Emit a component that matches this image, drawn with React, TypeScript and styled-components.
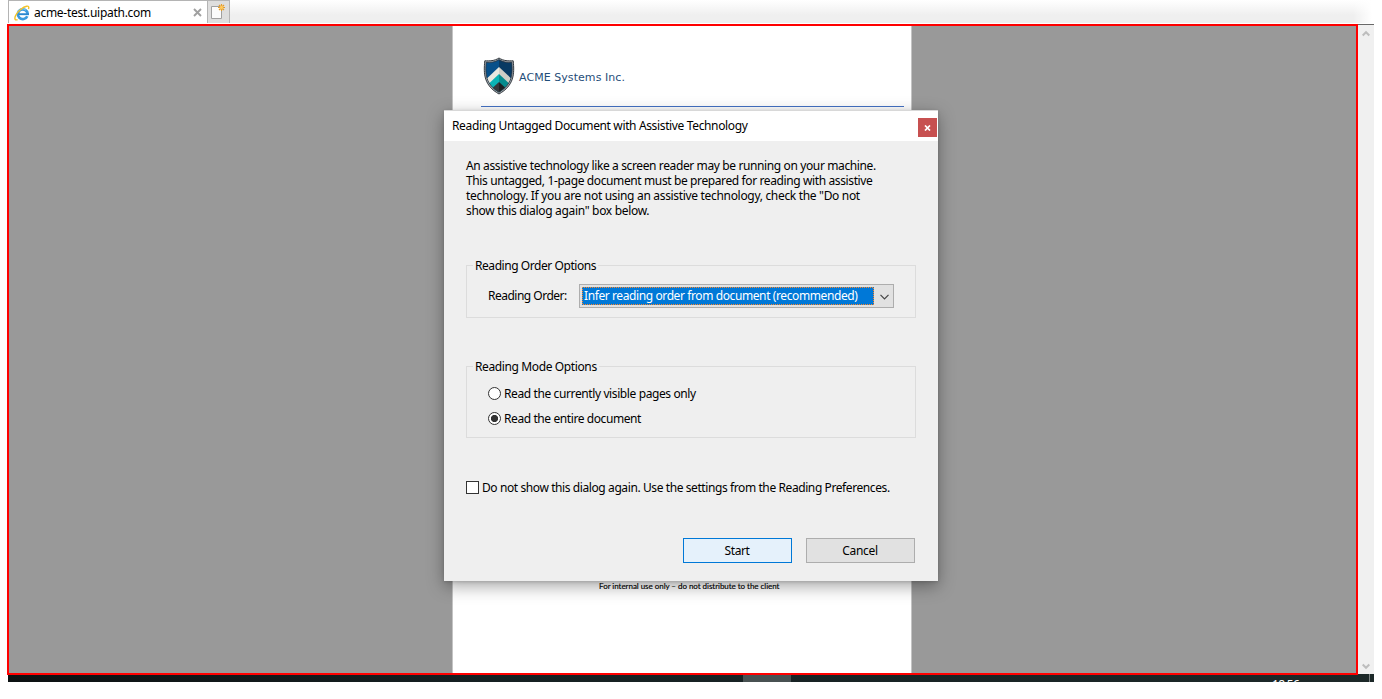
import React from "react";
import styled, { createGlobalStyle } from "styled-components";

const GlobalStyle = createGlobalStyle`
  *, *::before, *::after { box-sizing: border-box; }
  body {
    margin: 0;
    background: #fff;
    overflow: hidden;
    font-family: "Noto Sans", "Open Sans", sans-serif;
    font-size: 12px;
    color: #000;
  }
`;

const Screen = styled.div`
  position: relative;
  width: 1366px;
  height: 682px;
  margin-left: 8px;
  display: flex;
  flex-direction: column;
`;

const Text = styled.span<{ $track?: number }>`
  display: block;
  white-space: nowrap;
  line-height: 15px;
  letter-spacing: ${(p) => p.$track ?? 0}px;
`;

/* ---------- browser tabs ---------- */

const TabBar = styled.div`
  display: flex;
  flex: none;
  height: 24px;
  padding-bottom: 1px;
  background: linear-gradient(to right, transparent 1345px, #fff 1364px),
    linear-gradient(#fff 0, #fafafa 5px, #efefef 15px, #efefef 23px, #fff 23px);
`;

const Tab = styled.div`
  display: flex;
  align-items: center;
  width: 199px;
  height: 23px;
  padding: 1px 5px 0 5px;
  background: #fff;
  border: 1px solid #b4b4b4;
  border-width: 1px 0 0 1px;
`;

const TabTitle = styled(Text)`
  flex: 1;
  margin-left: 4px;
`;

const NewTab = styled.div`
  width: 23px;
  height: 23px;
  padding: 2px 0 0 2px;
  background: #dedede;
  border: 1px solid #b4b4b4;
  border-bottom: 0;
`;

/* ---------- document viewer ---------- */

const Main = styled.div`
  display: flex;
  flex: none;
  height: 650px;
`;

const Viewer = styled.div`
  display: flex;
  justify-content: flex-start;
  width: 1351px;
  height: 651px;
  margin-left: -1px;
  padding-left: 443px;
  flex: none;
  border: 2px solid #f00;
  background: #999;
  position: relative;
`;

const Page = styled.div`
  display: flex;
  flex-direction: column;
  width: 460px;
  height: 647px;
  background: #fff;
  border: 1px solid #c4c4c4;
  border-width: 0 1px 0 1px;
`;

const Letterhead = styled.div`
  display: flex;
  align-items: center;
  height: 81px;
  margin: 0 7px 0 28px;
  padding: 20px 0 0 2px;
  border-bottom: 1px solid #4472c4;
`;

const Company = styled(Text)`
  margin-left: 4px;
  padding-top: 2px;
  font-family: "DejaVu Sans", Verdana, sans-serif;
  font-size: 11px;
  color: #1f4e79;
`;

const Footer = styled(Text)`
  margin: 473px 0 0 146px;
  font-family: Lato, "Open Sans", sans-serif;
  font-size: 8px;
  line-height: 12px;
  -webkit-text-stroke: 0.15px #000;
`;

const ScrollBar = styled.div`
  display: flex;
  flex-direction: column;
  justify-content: space-between;
  align-items: center;
  width: 16px;
  height: 650px;
  padding: 5px 0 4px;
  background: #f0f0f0;
  border-top: 1px solid #696969;
`;

/* ---------- taskbar ---------- */

const TaskBar = styled.div`
  display: flex;
  height: 8px;
  overflow: hidden;
  background: linear-gradient(to right, #0c1112, #152022 35%, #1c2828);
`;

const ActiveTask = styled.div`
  width: 48px;
  margin-left: 735px;
  background: #485152;
`;

const Clock = styled(Text)`
  margin: 3px 0 0 481px;
  width: 97px;
  color: #fff;
`;

const ShowDesktop = styled.div`
  width: 5px;
  border-left: 1px solid #7b8282;
`;

/* ---------- dialog ---------- */

const Dialog = styled.div`
  position: absolute;
  left: 436px;
  top: 110px;
  width: 494px;
  height: 471px;
  display: flex;
  flex-direction: column;
  background: #efefef;
  border-top: 1px solid #d8d8d8;
  box-shadow: 0 5px 16px rgba(0, 0, 0, 0.36), 0 1px 3px rgba(0, 0, 0, 0.15);
`;

const TitleBar = styled.div`
  display: flex;
  justify-content: space-between;
  align-items: flex-start;
  height: 30px;
  padding: 7px 1px 0 8px;
  background: #fff;
`;

const CloseButton = styled.div`
  display: flex;
  align-items: center;
  justify-content: center;
  width: 19px;
  height: 19px;
  background: #c75050;
`;

const Body = styled.div`
  display: flex;
  flex-direction: column;
  padding: 17px 22px 0;
`;

const Message = styled.div`
  height: 107px;
`;

const Group = styled.fieldset<{ $height: number; $after: number }>`
  position: relative;
  height: ${(p) => p.$height}px;
  margin: 0 0 ${(p) => p.$after}px;
  padding: 0;
  border: 1px solid #dcdcdc;
`;

const GroupLabel = styled.span`
  position: absolute;
  left: 6px;
  top: -8px;
  padding: 0 2px;
  background: #efefef;
`;

const Field = styled.div`
  display: flex;
  align-items: center;
  padding: 18px 21px 0 21px;
`;

const FieldLabel = styled(Text)`
  width: 91px;
  padding-bottom: 1px;
`;

const Combo = styled.div`
  display: flex;
  width: 315px;
  height: 24px;
  padding: 2px;
  border: 1px solid #adadad;
  background: #e1e1e1;
`;

const Selected = styled.div`
  width: 292px;
  height: 18px;
  padding: 1px 0 0 2px;
  color: #fff;
  background:
    repeating-linear-gradient(to right, #ff8728 0 1px, #0078d7 1px 2px) top / 100% 1px no-repeat,
    repeating-linear-gradient(to right, #0078d7 0 1px, #ff8728 1px 2px) bottom / 100% 1px no-repeat,
    repeating-linear-gradient(#ff8728 0 1px, #0078d7 1px 2px) left / 1px 100% no-repeat,
    repeating-linear-gradient(#0078d7 0 1px, #ff8728 1px 2px) right / 1px 100% no-repeat,
    #0078d7;
  line-height: 15px;
`;

const ComboArrow = styled.div`
  flex: 1;
  display: flex;
  align-items: center;
  justify-content: center;
  padding: 1px 0 0 3px;
`;

const Option = styled.div<{ $gap: number }>`
  display: flex;
  align-items: center;
  height: 15px;
  margin: ${(p) => p.$gap}px 0 0 21px;
  gap: 3px;
`;

const Radio = styled.span<{ $checked?: boolean }>`
  width: 13px;
  height: 13px;
  border: 1px solid #333;
  border-radius: 50%;
  background: ${(p) =>
    p.$checked ? "radial-gradient(circle, #333 3.2px, #fff 4px)" : "#fff"};
`;

const CheckRow = styled.div`
  display: flex;
  align-items: center;
  height: 15px;
  gap: 3px;
`;

const CheckBox = styled.span`
  width: 13px;
  height: 13px;
  border: 1px solid #333;
  background: #fff;
`;

const Actions = styled.div`
  display: flex;
  justify-content: flex-end;
  gap: 14px;
  margin: 43px 1px 0 0;
`;

const Button = styled.div<{ $primary?: boolean }>`
  display: flex;
  align-items: center;
  justify-content: center;
  width: 109px;
  height: 25px;
  padding-right: 1px;
  border: 1px solid ${(p) => (p.$primary ? "#0078d7" : "#adadad")};
  background: ${(p) => (p.$primary ? "#e5f1fb" : "#e1e1e1")};
`;

/* ---------- drawings ---------- */

const BrowserIcon = () => (
  <svg width="16" height="16" viewBox="0 0 16 16">
    <path
      d="M13.3 11.200A4.900 4.900 0 1 1 13.700 8.800"
      fill="none"
      stroke="#3b9ade"
      strokeWidth="2.700"
    />
    <path d="M4.500 9.200H15" stroke="#2a86cf" strokeWidth="1.900" />
    <path d="M4.200 6.500A5 5 0 0 1 12 5.200" fill="none" stroke="#7fd0f5" strokeWidth="1" />
    <path
      d="M3.600 14.600C.9 15.600.2 13.600 1.600 10.600 3.600 6.200 9.200 1.800 12.600 1.200c2.200-.4 2.500 1 1.900 2.900"
      fill="none"
      stroke="#f2c32a"
      strokeWidth="1.400"
    />
  </svg>
);

const NewTabIcon = () => (
  <svg width="17" height="18" viewBox="0 0 17 18">
    <path d="M1.5 3.5h10v12h-10z" fill="#fbfbfb" stroke="#a0a0a0" />
    <path
      d="M11.500 1v7M8 4.500h7M9 2l5 5M14 2 9 7"
      stroke="#e69c26"
      strokeWidth="1.200"
    />
    <circle cx="11.500" cy="4.500" r="1.700" fill="#ffc95c" />
  </svg>
);

const Shield = () => (
  <svg width="32" height="38" viewBox="0 0 32 38">
    <defs>
      <clipPath id="shield">
        <path d="M16 2.6c4 2.8 8.500 3 12.800 2.700C29.800 17 29.500 27 16 35.300 2.500 27 2.200 17 3.200 5.300 7.500 5.600 12 5.400 16 2.600z" />
      </clipPath>
    </defs>
    <path
      d="M16 1c4.500 3 9.500 3 14.200 2.800C31.600 17 31 28.500 16 37 1 28.500.400 17 1.800 3.800 6.500 4 11.500 4 16 1z"
      fill="#a9afb4"
      stroke="#33393f"
      strokeWidth="1"
    />
    <g clipPath="url(#shield)">
      <path d="M0 0h16v38H0z" fill="#07508a" />
      <path d="M16 0h16v38H16z" fill="#083a63" />
      <path d="M16 10 0 25v13h16z" fill="#e9e8e0" />
      <path d="M16 10 32 25v13H16z" fill="#cfcec6" />
      <path d="M16 17 0 32v6h16z" fill="#0ab3b5" />
      <path d="M16 17 32 32v6H16z" fill="#078c8e" />
      <path d="M16 25 5 35v3h11z" fill="#34373b" />
      <path d="M16 25 27 35v3H16z" fill="#1f2124" />
    </g>
    <path
      d="M16 2.600c4 2.800 8.500 3 12.800 2.700C29.800 17 29.500 27 16 35.300 2.500 27 2.200 17 3.200 5.300 7.500 5.600 12 5.400 16 2.600z"
      fill="none"
      stroke="#2b3540"
      strokeWidth=".8"
    />
  </svg>
);

const ScrollArrow = ({ down }: { down?: boolean }) => (
  <svg width="8" height="7" viewBox="0 0 8 7">
    <path
      d={down ? "M.7 1.500 4 4.800 7.300 1.500" : "M.7 5.500 4 2.200 7.300 5.500"}
      fill="none"
      stroke="#bdbdbd"
      strokeWidth="2"
    />
  </svg>
);

const message: [string, number][] = [
  ["An assistive technology like a screen reader may be running on your machine.", -0.38],
  ["This untagged, 1-page document must be prepared for reading with assistive", -0.385],
  ["technology. If you are not using an assistive technology, check the \"Do not", -0.32],
  ["show this dialog again\" box below.", -0.32],
];

export default function App() {
  return (
    <>
      <GlobalStyle />
      <Screen>
        <TabBar>
          <Tab>
            <BrowserIcon />
            <TabTitle $track={-0.28}>acme-test.uipath.com</TabTitle>
            <svg width="9" height="9" viewBox="0 0 9 9">
              <path d="M1 1l7 7M8 1 1 8" stroke="#a0a0a0" strokeWidth="1.900" />
            </svg>
          </Tab>
          <NewTab>
            <NewTabIcon />
          </NewTab>
        </TabBar>
        <Main>
          <Viewer>
            <Page>
              <Letterhead>
                <Shield />
                <Company $track={0.06}>ACME Systems Inc.</Company>
              </Letterhead>
              <Footer $track={-0.04}>For internal use only – do not distribute to the client</Footer>
            </Page>
          </Viewer>
          <ScrollBar>
            <ScrollArrow />
            <ScrollArrow down />
          </ScrollBar>
        </Main>
        <TaskBar>
          <ActiveTask />
          <Clock $track={-0.7}>18:56</Clock>
          <ShowDesktop />
        </TaskBar>

        <Dialog>
          <TitleBar>
            <Text $track={-0.36}>Reading Untagged Document with Assistive Technology</Text>
            <CloseButton>
              <svg width="7" height="6" viewBox="0 0 7 6">
                <path d="M1 .5l5 5M6 .5l-5 5" stroke="#fff" strokeWidth="1.700" />
              </svg>
            </CloseButton>
          </TitleBar>
          <Body>
            <Message>
              {message.map(([line, track]) => (
                <Text key={line} $track={track}>
                  {line}
                </Text>
              ))}
            </Message>
            <Group $height={53} $after={48}>
              <GroupLabel>
                <Text $track={-0.44}>Reading Order Options</Text>
              </GroupLabel>
              <Field>
                <FieldLabel $track={-0.5}>Reading Order:</FieldLabel>
                <Combo>
                  <Selected>
                    <Text $track={-0.4}>Infer reading order from document (recommended)</Text>
                  </Selected>
                  <ComboArrow>
                    <svg width="9" height="6" viewBox="0 0 9 6">
                      <path d="M.5 .8l4 4 4-4" fill="none" stroke="#444" strokeWidth="1.200" />
                    </svg>
                  </ComboArrow>
                </Combo>
              </Field>
            </Group>
            <Group $height={72} $after={42}>
              <GroupLabel>
                <Text $track={-0.38}>Reading Mode Options</Text>
              </GroupLabel>
              <Option $gap={19}>
                <Radio />
                <Text $track={-0.39}>Read the currently visible pages only</Text>
              </Option>
              <Option $gap={10}>
                <Radio $checked />
                <Text $track={-0.41}>Read the entire document</Text>
              </Option>
            </Group>
            <CheckRow>
              <CheckBox />
              <Text $track={-0.405}>
                Do not show this dialog again. Use the settings from the Reading Preferences.
              </Text>
            </CheckRow>
            <Actions>
              <Button $primary>
                <Text $track={-0.4}>Start</Text>
              </Button>
              <Button>
                <Text $track={-0.3}>Cancel</Text>
              </Button>
            </Actions>
          </Body>
        </Dialog>
      </Screen>
    </>
  );
}
